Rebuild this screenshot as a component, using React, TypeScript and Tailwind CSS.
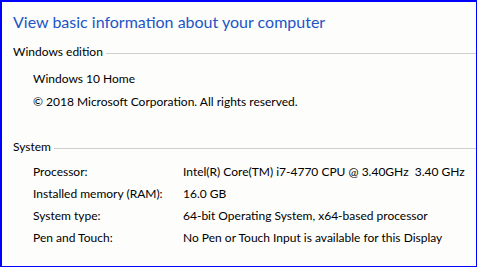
import React from 'react';

const SectionHeader: React.FC<{ title: string }> = ({ title }) => (
    <div className="flex items-center h-[20px]">
        <span className="text-black pr-[3px]">{title}</span>
        <div className="flex-1 h-px bg-[#cfcfcf] mt-[2px]"></div>
    </div>
);

const InfoRow: React.FC<{ label: string; value: string }> = ({ label, value }) => (
    <div className="flex h-[22px] items-center pl-[20px]">
        <span className="w-[150px] shrink-0">{label}</span>
        <span className="whitespace-pre">{value}</span>
    </div>
);

const systemRows = [
    { label: 'Processor:', value: 'Intel(R) Core(TM) i7-4770 CPU @ 3.40GHz  3.40 GHz' },
    { label: 'Installed memory (RAM):', value: '16.0 GB' },
    { label: 'System type:', value: '64-bit Operating System, x64-based processor' },
    { label: 'Pen and Touch:', value: 'No Pen or Touch Input is available for this Display' },
];

export default function App() {
    return (
        <div className="w-[477px] h-[267px] overflow-hidden bg-[#fdfdfb] border-2 border-r-[1px] border-b-[1px] border-[#0000ff] font-['Lato',sans-serif] text-[12px] text-black">
            <div className="pl-[11px] pt-[7px]">
                <h1 className="text-[#1b55c6] text-[16px] leading-[26px] h-[33px]">View basic information about your computer</h1>

                <SectionHeader title="Windows edition" />
                <div className="pt-[5px]">
                    <div className="pl-[20px] h-[23px] flex items-center">Windows 10 Home</div>
                    <div className="pl-[20px] h-[23px] flex items-center">© 2018 Microsoft Corporation. All rights reserved.</div>
                </div>

                <div className="mt-[24px]">
                    <SectionHeader title="System" />
                </div>
                <div className="pt-[4px]">
                    {systemRows.map((row, index) => (
                        <InfoRow key={index} {...row} />
                    ))}
                </div>
                <div className="mt-[17px] leading-[16px]">Computer name, domain, and workgroup settings</div>
            </div>
        </div>
    );
}
